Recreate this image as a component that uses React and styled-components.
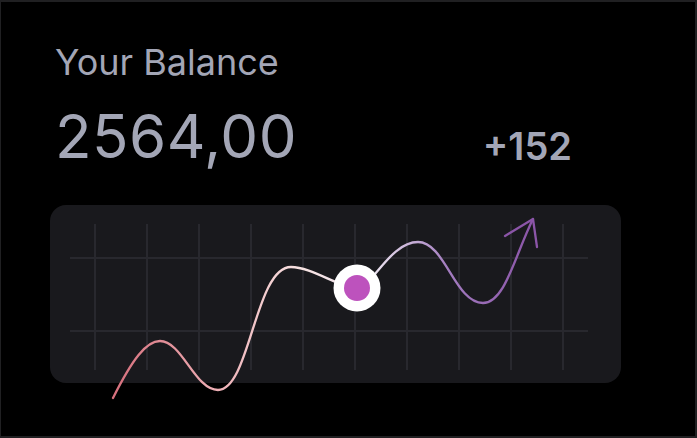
import React from 'react'
import styled, { createGlobalStyle } from 'styled-components'

const Global = createGlobalStyle`
  html, body {
    margin: 0;
    padding: 0;
    background: #1e1e20;
  }
  body {
    font-family: 'Inter', 'Liberation Sans', sans-serif;
  }
`

const columns = [45, 97, 149, 201, 253, 305, 357, 409, 461, 513]
const rows = [53, 126]

export default function App() {
  return (
    <>
      <Global />
      <Card>
        <Title>Your Balance</Title>
        <Row>
          <Amount>2564,00</Amount>
          <Delta>+152</Delta>
        </Row>
        <Panel>
          <Chart viewBox="0 0 571 178">
            <defs>
              <linearGradient id="line" gradientUnits="userSpaceOnUse" x1="63" y1="0" x2="483" y2="0">
                <stop offset="0" stopColor="#d66f7c" />
                <stop offset="0.25" stopColor="#eeb0b6" />
                <stop offset="0.45" stopColor="#f7e2e2" />
                <stop offset="0.62" stopColor="#ece4f0" />
                <stop offset="0.8" stopColor="#a27bbf" />
                <stop offset="1" stopColor="#8b55a8" />
              </linearGradient>
            </defs>
            {columns.map((x) => (
              <line key={x} x1={x} y1="19" x2={x} y2="165" stroke="#28282e" strokeWidth="2" />
            ))}
            {rows.map((y) => (
              <line key={y} x1="20" y1={y} x2="538" y2={y} stroke="#28282e" strokeWidth="2" />
            ))}
            <path
              d="M63,193 C82,155 96,136 110,136 C132,136 145,185 168,185 C200,185 205,62 241,62 C262,62 290,83 307,83 C322,83 340,37 368,37 C395,37 405,98 433,98 C455,98 465,50 483,14"
              fill="none"
              stroke="url(#line)"
              strokeWidth="2.3"
              strokeLinecap="round"
            />
            <path
              d="M455,31 L483,14 L487,42"
              fill="none"
              stroke="#8b55a8"
              strokeWidth="2.3"
              strokeLinecap="round"
              strokeLinejoin="round"
            />
            <circle cx="307" cy="83" r="23.5" fill="#ffffff" />
            <circle cx="307" cy="83" r="13" fill="#bd52bd" />
          </Chart>
        </Panel>
      </Card>
    </>
  )
}

const Card = styled.div`
  box-sizing: border-box;
  width: 697px;
  height: 438px;
  background: #000;
  border-top: 2px solid #202022;
  border-bottom: 2px solid #202022;
  border-left: 1px solid #202022;
  border-right: 2px solid #202022;
  padding: 38px 0 0 54px;
  display: flex;
  flex-direction: column;
`

const Title = styled.div`
  color: #a3a6b6;
  font-size: 36px;
  line-height: 44px;
  font-weight: 400;
`

const Row = styled.div`
  display: flex;
  align-items: baseline;
  justify-content: space-between;
  width: 517px;
  margin-top: 20px;
`

const Amount = styled.div`
  color: #a3a6b6;
  font-size: 60px;
  line-height: 64px;
  font-weight: 400;
  letter-spacing: 0.5px;
`

const Delta = styled.div`
  color: #a3a6b6;
  font-size: 38px;
  font-weight: 600;
  position: relative;
  top: 2px;
`

const Panel = styled.div`
  margin: 37px 0 0 -5px;
  width: 571px;
  height: 178px;
  border-radius: 16px;
  background: #19191d;
`

const Chart = styled.svg`
  display: block;
  width: 100%;
  height: 100%;
  overflow: visible;
`
